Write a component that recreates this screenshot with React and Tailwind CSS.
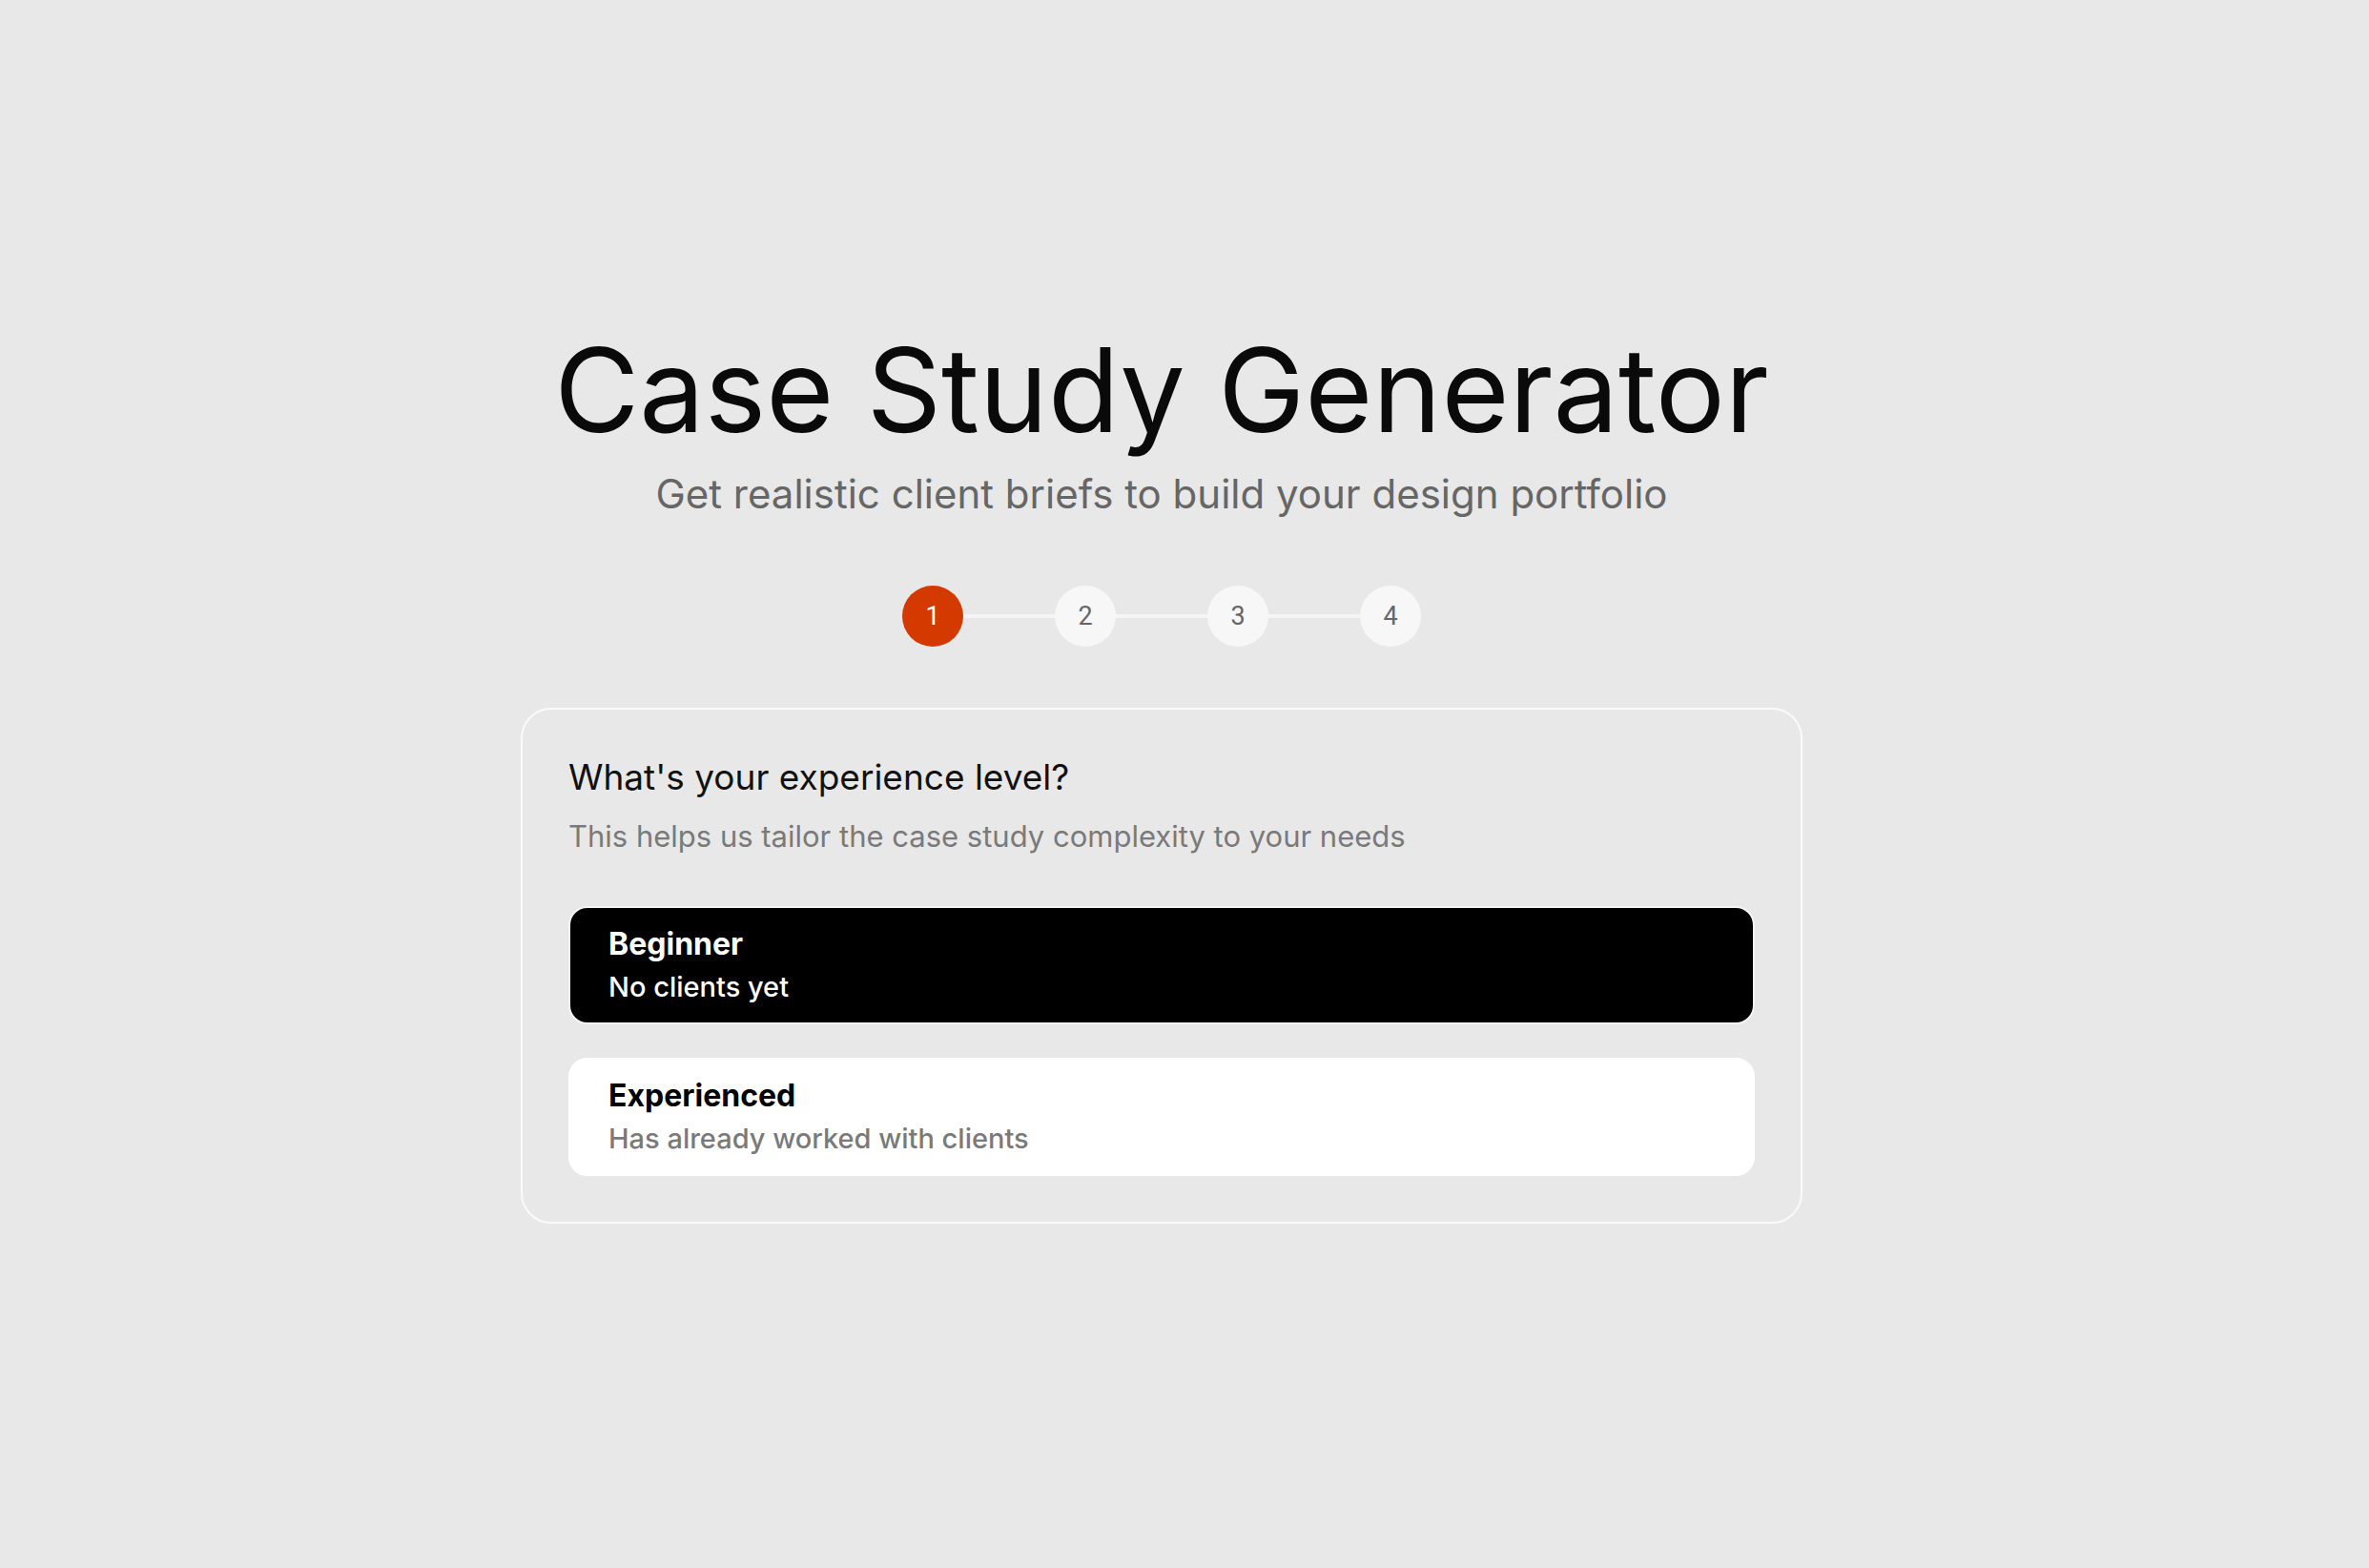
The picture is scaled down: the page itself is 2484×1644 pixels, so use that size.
import { useState } from 'react';

const steps = [1, 2, 3, 4];

const levels = [
  { id: 'beginner', title: 'Beginner', desc: 'No clients yet' },
  { id: 'experienced', title: 'Experienced', desc: 'Has already worked with clients' },
];

export default function App() {
  const [level, setLevel] = useState('beginner');
  const current = 1;

  return (
    <div
      className="min-h-screen w-full bg-[#e8e8e8] pr-12"
      style={{ fontFamily: 'Inter, "Noto Sans", sans-serif' }}
    >
      <div className="flex flex-col items-center pt-[348px]">
        {/* Header */}
        <h1 className="text-[122px] leading-none font-normal text-[#0a0a0a]">
          Case Study Generator
        </h1>
        <p className="mt-6 text-[42px] leading-[48px] text-[#666666]">
          Get realistic client briefs to build your design portfolio
        </p>

        {/* Steps */}
        <div className="mt-[72px] flex items-center">
          {steps.map((n, i) => (
            <div key={n} className="flex items-center">
              {i > 0 && <div className="h-[4px] w-[96px] bg-[#f5f5f5]" />}
              <div
                className={`flex h-16 w-16 items-center justify-center rounded-full text-[27px] ${
                  n === current ? 'bg-[#d43a00] text-white' : 'bg-[#f7f7f7] text-[#666666]'
                }`}
                style={{ fontFamily: 'Roboto, "Liberation Sans", sans-serif' }}
              >
                {n}
              </div>
            </div>
          ))}
        </div>

        {/* Card */}
        <div className="mt-16 w-[1344px] rounded-[32px] border-2 border-[#fafafa] p-12">
          <h2 className="text-[37px] leading-[45px] font-normal text-[#111111]">
            What's your experience level?
          </h2>
          <p className="mt-5 text-[31px] leading-[40px] text-[#7a7a7a]">
            This helps us tailor the case study complexity to your needs
          </p>

          <div className="mt-[53px] flex flex-col gap-[35px]">
            {levels.map((l) => {
              const active = level === l.id;
              return (
                <button
                  key={l.id}
                  onClick={() => setLevel(l.id)}
                  className={`w-full rounded-[20px] border-2 px-10 py-[19px] text-left ${
                    active ? 'border-[#f5f5f5] bg-black' : 'border-white bg-white'
                  }`}
                >
                  <div className={`text-[32px] leading-[38px] font-bold ${active ? 'text-white' : 'text-black'}`}>
                    {l.title}
                  </div>
                  <div className={`mt-2 text-[29px] leading-[36px] font-medium ${active ? 'text-white' : 'text-[#7a7a7a]'}`}>
                    {l.desc}
                  </div>
                </button>
              );
            })}
          </div>
        </div>
      </div>
    </div>
  );
}
